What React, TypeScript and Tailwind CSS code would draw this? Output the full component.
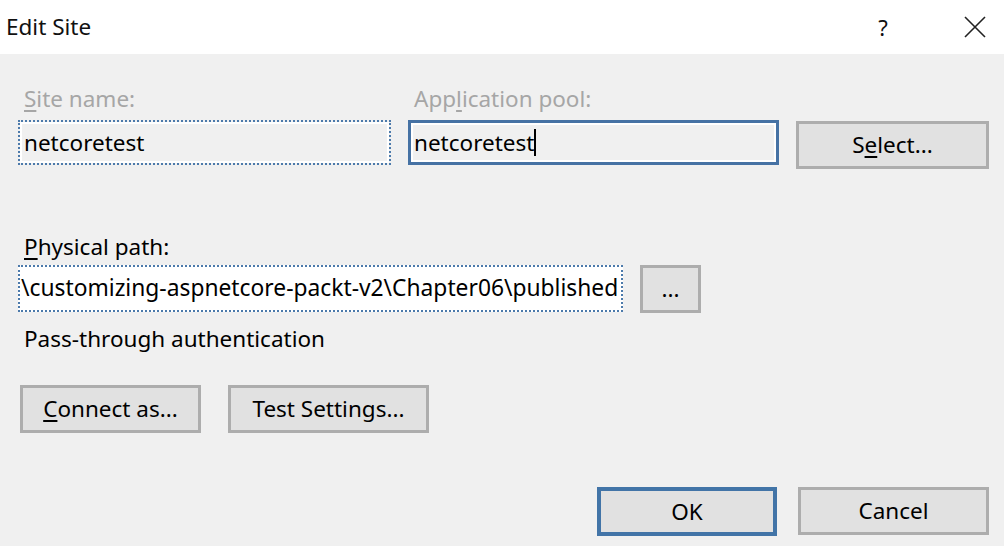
import React from 'react';

const font = { fontFamily: '"Noto Sans", "Open Sans", sans-serif' };

const Btn: React.FC<{ w: string; children: React.ReactNode; primary?: boolean }> = ({ w, children, primary }) => (
  <button
    className={
      primary
        ? `${w} h-[49px] bg-[#e1e1e1] border-[4px] border-[#4274a7] text-[22.5px] text-black flex items-center justify-center`
        : `${w} h-[48px] bg-[#e1e1e1] border-[3px] border-[#adadad] text-[22.5px] text-black flex items-center justify-center`
    }
  >
    {children}
  </button>
);

export default function App() {
  return (
    <div className="w-[1004px] h-[546px] bg-[#f0f0f0] overflow-hidden text-black" style={font}>
      {/* title bar */}
      <div className="h-[54px] bg-white flex items-center">
        <div className="pl-[6px] text-[22.5px] leading-none text-[#111]">Edit Site</div>
        <div className="ml-auto w-[30px] text-center text-[22px] text-[#111] mr-[66px]">?</div>
        <svg className="mr-[18px]" width="22" height="22" viewBox="0 0 22 22">
          <path d="M1 1 L21 21 M21 1 L1 21" stroke="#222" strokeWidth="1.6" fill="none" />
        </svg>
      </div>

      <div className="pl-[18px] pt-[31px]">
        {/* site name / pool */}
        <div className="flex items-start">
          <div className="w-[373px]">
            <div className="pl-[6px] h-[29px] leading-[28px] text-[22.5px] text-[#a6a6a6]">
              <u className="underline-offset-[3px]">S</u>ite name:
            </div>
            <div className="mt-[6px] h-[45px] border-2 border-dotted border-[#4c7aab] bg-[#f0f0f0] shadow-[inset_0_0_0_2px_#ffffff] flex items-center pl-[4px] text-[22.5px]">
              netcoretest
            </div>
          </div>
          <div className="ml-[17px] w-[371px]">
            <div className="pl-[6px] h-[29px] leading-[28px] text-[22.5px] text-[#a6a6a6]">
              App<u className="underline-offset-[3px]">l</u>ication pool:
            </div>
            <div className="mt-[6px] h-[45px] border-[3px] border-[#4672a4] bg-[#f0f0f0] shadow-[inset_0_0_0_2px_#ffffff] flex items-center pl-[3px] text-[22.5px]">
              netcoretest
              <span className="inline-block w-[2px] h-[27px] bg-black" />
            </div>
          </div>
          <div className="ml-[17px] mt-[36px]">
            <Btn w="w-[193px]">
              <span>
                S<u className="underline-offset-[3px]">e</u>lect...
              </span>
            </Btn>
          </div>
        </div>

        {/* physical path */}
        <div className="mt-[64px] pl-[6px] h-[28px] leading-[28px] text-[22.5px]">
          <u className="underline-offset-[3px]">P</u>hysical path:
        </div>
        <div className="mt-[4px] flex">
          <div className="w-[605px] h-[47px] border-2 border-dotted border-[#4c7aab] bg-white flex items-center overflow-hidden pl-[1px] text-[22.8px] whitespace-nowrap">
            \customizing-aspnetcore-packt-v2\Chapter06\published
          </div>
          <div className="ml-[17px]">
            <Btn w="w-[61px]">...</Btn>
          </div>
        </div>

        <div className="mt-[12px] pl-[6px] h-[28px] leading-[28px] text-[22.5px]">Pass-through authentication</div>

        {/* connect / test */}
        <div className="mt-[32px] flex ml-[2px]">
          <Btn w="w-[181px]">
            <span>
              <u className="underline-offset-[3px]">C</u>onnect as...
            </span>
          </Btn>
          <div className="ml-[27px]">
            <Btn w="w-[201px]">Test Settings...</Btn>
          </div>
        </div>

        {/* ok / cancel */}
        <div className="mt-[54px] flex justify-end pr-[15px]">
          <Btn w="w-[180px]" primary>
            OK
          </Btn>
          <div className="ml-[21px]">
            <Btn w="w-[191px]">Cancel</Btn>
          </div>
        </div>
      </div>
    </div>
  );
}
